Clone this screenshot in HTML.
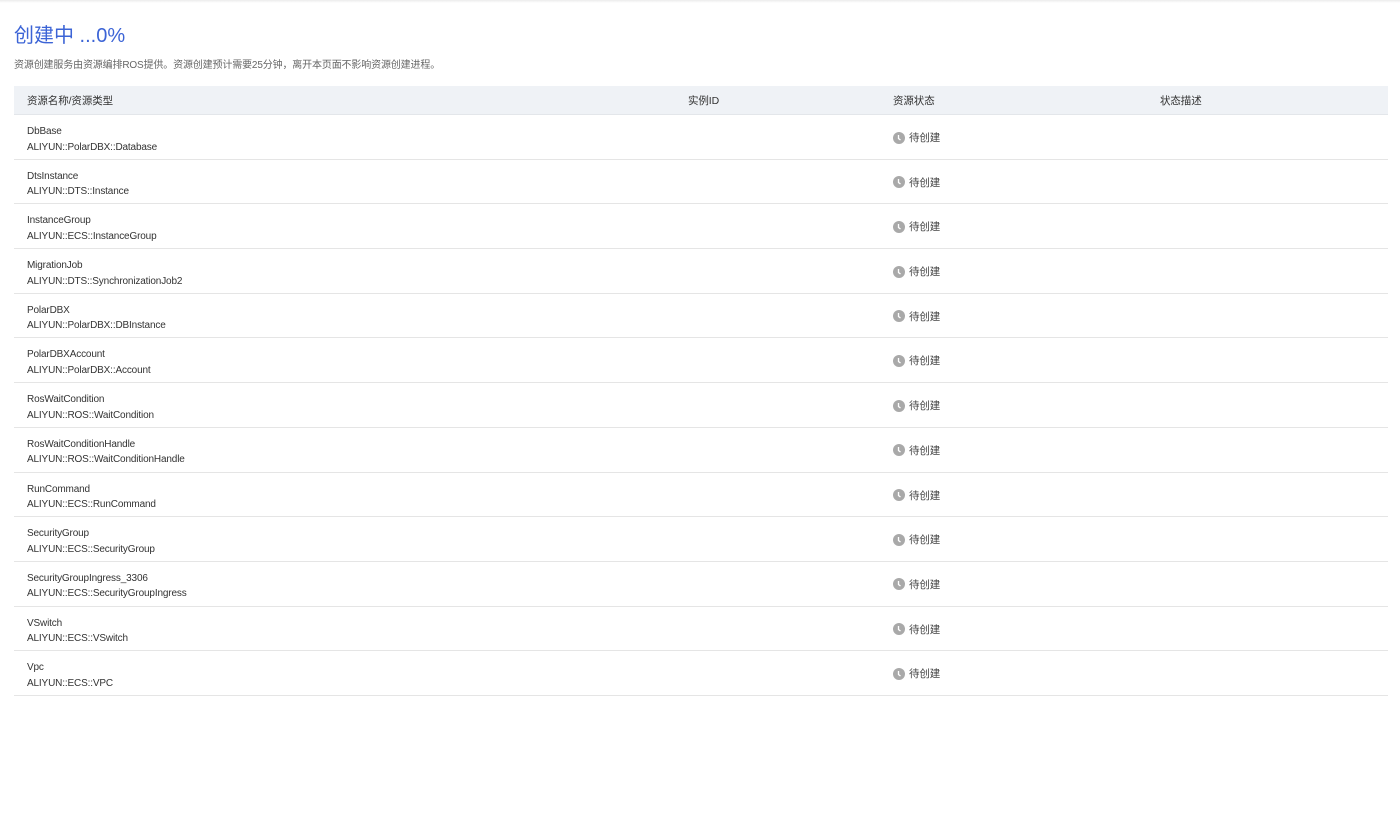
<!DOCTYPE html>
<html><head><meta charset="utf-8"><style>
*{margin:0;padding:0;box-sizing:border-box}
body{width:1400px;height:816px;background:#fff;font-family:"Liberation Sans","Noto Sans CJK SC",sans-serif;color:#333;position:relative;overflow:hidden}
.top{position:absolute;left:0;top:0;width:1400px;height:3px;background:linear-gradient(#ececec,#fff)}
h1{position:absolute;left:14px;top:23px;font-size:20px;font-weight:normal;color:#3c64d6;line-height:26px}
.sub{position:absolute;left:14px;top:59px;font-size:10px;letter-spacing:-0.15px;color:#666;line-height:14px}
.tbl{position:absolute;left:14px;top:86px;width:1374px}
.hd{height:29px;background:#eff2f6;border-bottom:1px solid #e3e6ea;position:relative;font-size:10.5px;color:#333;letter-spacing:-0.1px}
.hd span,.row span{position:absolute}
.row{height:44.7px;border-bottom:1px solid #e5e5e5;position:relative;font-size:10px;letter-spacing:-0.15px;color:#333}
.c1{left:13px}.c2{left:674px}.c3{left:879px}.c4{left:1146px}
.hd span{top:7px}
.n{top:9px;line-height:15.5px}
.st{top:15px;display:flex;align-items:center;color:#444;font-size:10.5px}
.st svg{margin-right:4px}
</style></head><body>
<div class="top"></div>
<h1>创建中 ...0%</h1>
<div class="sub">资源创建服务由资源编排ROS提供。资源创建预计需要25分钟，离开本页面不影响资源创建进程。</div>
<div class="tbl">
<div class="hd"><span class="c1">资源名称/资源类型</span><span class="c2">实例ID</span><span class="c3">资源状态</span><span class="c4">状态描述</span></div>
<div id="rows"></div>
</div>
<script>
var d=[["DbBase","ALIYUN::PolarDBX::Database"],["DtsInstance","ALIYUN::DTS::Instance"],["InstanceGroup","ALIYUN::ECS::InstanceGroup"],["MigrationJob","ALIYUN::DTS::SynchronizationJob2"],["PolarDBX","ALIYUN::PolarDBX::DBInstance"],["PolarDBXAccount","ALIYUN::PolarDBX::Account"],["RosWaitCondition","ALIYUN::ROS::WaitCondition"],["RosWaitConditionHandle","ALIYUN::ROS::WaitConditionHandle"],["RunCommand","ALIYUN::ECS::RunCommand"],["SecurityGroup","ALIYUN::ECS::SecurityGroup"],["SecurityGroupIngress_3306","ALIYUN::ECS::SecurityGroupIngress"],["VSwitch","ALIYUN::ECS::VSwitch"],["Vpc","ALIYUN::ECS::VPC"]];
var h="";d.forEach(function(r){h+='<div class="row"><span class="c1 n">'+r[0]+'<br>'+r[1]+'</span><span class="c3 st"><svg width="12" height="12" viewBox="0 0 12 12"><circle cx="6" cy="6" r="6" fill="#a9a9a9"/><path d="M5.5 3v3.5l2 1.5" stroke="#fff" stroke-width="1.3" fill="none"/></svg>待创建</span></div>'});
document.getElementById("rows").innerHTML=h;
</script>
</body></html>
